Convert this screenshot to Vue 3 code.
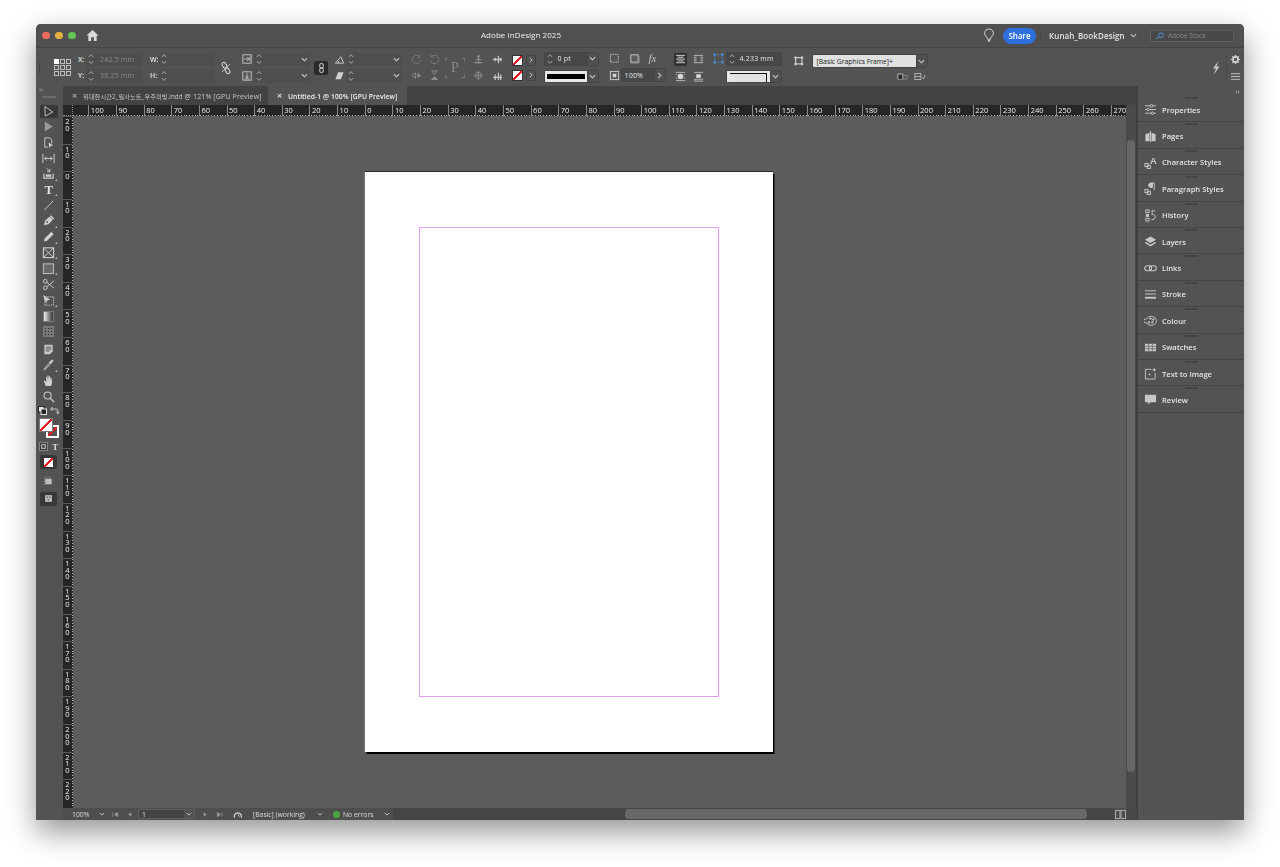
<template>
  <div class="screen">
    <div class="window">
      <!-- title bar -->
      <header class="titlebar">
        <div class="traffic">
          <span class="dot red"></span>
          <span class="dot yellow"></span>
          <span class="dot green"></span>
        </div>
        <svg class="home" viewBox="0 0 14 14"><path d="M7 1 L13.5 7 L11.5 7 L11.5 13 L8.5 13 L8.5 9 L5.5 9 L5.5 13 L2.5 13 L2.5 7 L.5 7 Z" fill="#d8d8d8"/></svg>
        <div class="app-title">Adobe InDesign 2025</div>
        <svg class="bulb" viewBox="0 0 12 16"><path d="M6 1 A4.6 4.6 0 0 0 3.6 9.6 L4.4 12 L7.6 12 L8.4 9.6 A4.6 4.6 0 0 0 6 1 Z" fill="none" stroke="#d4d4d4" stroke-width="1"/><path d="M4.8 13.5 H7.2" stroke="#d4d4d4" stroke-width="1.6"/></svg>
        <div class="share">Share</div>
        <div class="tsep"></div>
        <div class="user">Kunah_BookDesign</div>
        <svg class="chev user-chev" viewBox="0 0 8 8"><path d="M1 2.5 L4 5.5 L7 2.5" /></svg>
        <div class="tsep"></div>
        <div class="stock">
          <svg class="stock-ico" viewBox="0 0 14 10"><circle cx="9.5" cy="4" r="3" fill="none" stroke="#5a8fe0" stroke-width="1.1"/><path d="M7 6 L3 9" stroke="#5a8fe0" stroke-width="1.2"/></svg>
          <span>Adobe Stock</span>
        </div>
      </header>

      <!-- control panel -->
      <section class="control">
        <div class="grip"></div>
        <div class="refpoint">
          <i v-for="n in 9" :key="n" :class="{ on: n === 1 }"></i>
        </div>

        <div class="grp g-xy">
          <label>X:</label>
          <div class="field"><svg class="step" viewBox="0 0 6 12"><path d="M.8 4 L3 1.6 L5.2 4 M.8 8 L3 10.4 L5.2 8"/></svg><span class="dim">242.5 mm</span></div>
          <label>Y:</label>
          <div class="field"><svg class="step" viewBox="0 0 6 12"><path d="M.8 4 L3 1.6 L5.2 4 M.8 8 L3 10.4 L5.2 8"/></svg><span class="dim">38.25 mm</span></div>
        </div>
        <div class="grp g-wh">
          <label>W:</label>
          <div class="field"><svg class="step" viewBox="0 0 6 12"><path d="M.8 4 L3 1.6 L5.2 4 M.8 8 L3 10.4 L5.2 8"/></svg></div>
          <label>H:</label>
          <div class="field"><svg class="step" viewBox="0 0 6 12"><path d="M.8 4 L3 1.6 L5.2 4 M.8 8 L3 10.4 L5.2 8"/></svg></div>
        </div>
        <svg class="brokenlink" viewBox="0 0 10 14"><g transform="rotate(-30 5 7)" fill="none" stroke="#d0d0d0" stroke-width="1.1"><rect x="3.2" y=".8" width="3.6" height="6" rx="1.8"/><rect x="3.2" y="7.2" width="3.6" height="6" rx="1.8"/></g><path d="M1 11 L9 3" stroke="#d0d0d0" stroke-width=".8"/></svg>

        <div class="grp g-scale">
          <svg class="ico" viewBox="0 0 12 12"><rect x="1" y="1" width="10" height="10" fill="none" stroke="#cfcfcf"/><path d="M2.5 6 H8 M6 4 L8.5 6 L6 8 M9.5 3 V9" fill="none" stroke="#cfcfcf"/></svg>
          <div class="field spread"><svg class="step" viewBox="0 0 6 12"><path d="M.8 4 L3 1.6 L5.2 4 M.8 8 L3 10.4 L5.2 8"/></svg><svg class="chev" viewBox="0 0 8 8"><path d="M1 2.5 L4 5.5 L7 2.5"/></svg></div>
          <svg class="ico" viewBox="0 0 12 12"><rect x="1" y="1" width="10" height="10" fill="none" stroke="#cfcfcf"/><path d="M6 2.5 V8 M4 6 L6 8.5 L8 6 M3 9.5 H9" fill="none" stroke="#cfcfcf"/></svg>
          <div class="field spread"><svg class="step" viewBox="0 0 6 12"><path d="M.8 4 L3 1.6 L5.2 4 M.8 8 L3 10.4 L5.2 8"/></svg><svg class="chev" viewBox="0 0 8 8"><path d="M1 2.5 L4 5.5 L7 2.5"/></svg></div>
        </div>
        <div class="chainbtn"><svg viewBox="0 0 8 14"><rect x="2" y="1.5" width="4" height="6" rx="2" fill="none" stroke="#e0e0e0" stroke-width="1.1"/><rect x="2" y="6.5" width="4" height="6" rx="2" fill="none" stroke="#e0e0e0" stroke-width="1.1"/></svg></div>

        <div class="grp g-angle">
          <svg class="ico" viewBox="0 0 12 12"><path d="M1.5 10 H10.5 L7.5 3 Z M5 10 Q5 7.5 3.8 7" fill="none" stroke="#cfcfcf"/></svg>
          <div class="field spread"><svg class="step" viewBox="0 0 6 12"><path d="M.8 4 L3 1.6 L5.2 4 M.8 8 L3 10.4 L5.2 8"/></svg><svg class="chev" viewBox="0 0 8 8"><path d="M1 2.5 L4 5.5 L7 2.5"/></svg></div>
          <svg class="ico" viewBox="0 0 12 12"><path d="M1.5 10 L4.5 2.5 H10.5 L7.5 10 Z" fill="#cfcfcf"/></svg>
          <div class="field spread"><svg class="step" viewBox="0 0 6 12"><path d="M.8 4 L3 1.6 L5.2 4 M.8 8 L3 10.4 L5.2 8"/></svg><svg class="chev" viewBox="0 0 8 8"><path d="M1 2.5 L4 5.5 L7 2.5"/></svg></div>
        </div>

        <div class="grp g-rot">
          <svg class="ico" viewBox="0 0 12 12"><path d="M9.5 3 A4.6 4.6 0 1 0 10.6 6.5 M9.8 .8 V3.5 H7" fill="none" stroke="#7c7c7c"/></svg>
          <svg class="ico" viewBox="0 0 12 12"><path d="M2.5 3 A4.6 4.6 0 1 1 1.4 6.5 M2.2 .8 V3.5 H5" fill="none" stroke="#7c7c7c"/></svg>
          <svg class="ico" viewBox="0 0 12 12"><path d="M5 3 V9 L1 6 Z" fill="none" stroke="#8c8c8c"/><path d="M7 3 V9 L11 6 Z" fill="#8c8c8c"/></svg>
          <svg class="ico" viewBox="0 0 12 12"><path d="M3 1 H9 L6 5 Z" fill="none" stroke="#8c8c8c"/><path d="M2 11 H10 L6 6.5 Z" fill="#8c8c8c"/></svg>
        </div>
        <div class="ptext"><span>P</span></div>

        <div class="grp g-rot g-align">
          <svg class="ico" viewBox="0 0 12 12"><circle cx="6" cy="2.5" r="1.4" fill="#8c8c8c"/><path d="M6 3 V11 M3 6 H9 M1.5 9.5 H10.5" fill="none" stroke="#8c8c8c" stroke-width="1.3"/></svg>
          <svg class="ico" viewBox="0 0 12 12"><path d="M1 6 H11 M3.5 4 V8 M7 2 V10 M9.5 4 V8" fill="none" stroke="#c4c4c4" stroke-width="1.4"/></svg>
          <svg class="ico" viewBox="0 0 12 12"><circle cx="6" cy="6" r="3.4" fill="none" stroke="#8c8c8c"/><path d="M6 1 V11 M1.5 6 H10.5" stroke="#8c8c8c"/></svg>
          <svg class="ico" viewBox="0 0 12 12"><path d="M1 8 H11 M3.5 5 V11 M7 3 V11 M9.5 5 V11" fill="none" stroke="#c4c4c4" stroke-width="1.4"/></svg>
        </div>

        <div class="grp g-swatch">
          <div class="noneswatch"></div>
          <div class="arrowbtn"><svg class="chev-r" viewBox="0 0 8 8"><path d="M2.5 1 L5.5 4 L2.5 7"/></svg></div>
          <div class="noneswatch"></div>
          <div class="arrowbtn"><svg class="chev-r" viewBox="0 0 8 8"><path d="M2.5 1 L5.5 4 L2.5 7"/></svg></div>
        </div>

        <div class="grp g-stroke">
          <div class="field boxed">
            <svg class="step" viewBox="0 0 6 12"><path d="M.8 4 L3 1.6 L5.2 4 M.8 8 L3 10.4 L5.2 8"/></svg>
            <span class="val">0 pt</span>
            <div class="end"><svg class="chev" viewBox="0 0 8 8"><path d="M1 2.5 L4 5.5 L7 2.5"/></svg></div>
          </div>
          <div class="strokepick">
            <div class="strokebox"><i></i></div>
            <div class="end"><svg class="chev" viewBox="0 0 8 8"><path d="M1 2.5 L4 5.5 L7 2.5"/></svg></div>
          </div>
        </div>

        <div class="grp g-fx">
          <div class="fx-top">
            <svg class="ico" viewBox="0 0 12 12"><rect x="1.5" y="1.5" width="8.5" height="8.5" fill="none" stroke="#cfcfcf" stroke-dasharray="1.6 1"/></svg>
            <svg class="ico" viewBox="0 0 12 12"><rect x="2" y="2" width="8" height="8" fill="#5c5c5c" stroke="#cfcfcf"/><path d="M2 11 H11 V3" fill="none" stroke="#8c8c8c"/></svg>
            <span class="fxtext">fx</span>
          </div>
          <div class="fx-bottom">
            <svg class="ico" viewBox="0 0 12 12"><rect x="1.5" y="1.5" width="9" height="9" fill="none" stroke="#cfcfcf"/><rect x="4" y="4" width="4" height="4" fill="#cfcfcf"/></svg>
            <div class="field boxed pct">
              <span class="val">100%</span>
              <div class="end"><svg class="chev-r" viewBox="0 0 8 8"><path d="M2.5 1 L5.5 4 L2.5 7"/></svg></div>
            </div>
          </div>
        </div>

        <div class="grp g-text">
          <div class="textbtn on"><svg viewBox="0 0 12 12"><path d="M1 1.5 H11 M2.5 3.5 H9.5 M1 5.5 H11 M2.5 7.5 H9.5 M1 9.5 H11" stroke="#d8d8d8"/></svg></div>
          <div class="textbtn"><svg viewBox="0 0 12 12"><path d="M1 1.5 H11 M1 3.5 H4 M8 3.5 H11 M1 5.5 H4 M8 5.5 H11 M1 7.5 H4 M8 7.5 H11 M1 9.5 H11" stroke="#bdbdbd"/></svg></div>
          <div class="textbtn"><svg viewBox="0 0 12 12"><circle cx="6" cy="6" r="3" fill="#d8d8d8"/><path d="M1 1.5 H11 M1 10.5 H11" stroke="#bdbdbd"/><path d="M1 4 H2.5 M1 8 H2.5 M9.5 4 H11 M9.5 8 H11" stroke="#bdbdbd"/></svg></div>
          <div class="textbtn"><svg viewBox="0 0 12 12"><rect x="3.5" y="3.5" width="5" height="4" fill="#d8d8d8"/><path d="M1 1.5 H11 M1 9 H11 M1 11 H11" stroke="#bdbdbd"/></svg></div>
        </div>

        <div class="grp g-corner">
          <svg class="ico" viewBox="0 0 12 12"><rect x="2" y="2" width="8" height="8" fill="none" stroke="#4a90e2" stroke-dasharray="1.6 1.6"/><path d="M.5 .5 H3 V3 H.5 Z M9 .5 H11.5 V3 H9 Z M.5 9 H3 V11.5 H.5 Z M9 9 H11.5 V11.5 H9 Z" fill="#4a90e2"/></svg>
          <div class="field boxed">
            <svg class="step" viewBox="0 0 6 12"><path d="M.8 4 L3 1.6 L5.2 4 M.8 8 L3 10.4 L5.2 8"/></svg>
            <span class="val">4.233 mm</span>
          </div>
          <span></span>
          <div class="strokepick">
            <div class="strokebox light"><i></i></div>
            <div class="end"><svg class="chev" viewBox="0 0 8 8"><path d="M1 2.5 L4 5.5 L7 2.5"/></svg></div>
          </div>
        </div>

        <div class="grp g-style">
          <svg class="ico" viewBox="0 0 12 12"><rect x="2" y="2" width="7.5" height="7.5" fill="none" stroke="#cfcfcf" stroke-width="1.4"/><path d="M.5 .5 H3 V3 H.5 Z M8.5 .5 H11 V3 H8.5 Z M.5 8.5 H3 V11 H.5 Z M8.5 8.5 H11 V11 H8.5 Z" fill="#cfcfcf"/></svg>
          <div class="styledrop">
            <span>[Basic Graphics Frame]+</span>
            <div class="end"><svg class="chev" viewBox="0 0 8 8"><path d="M1 2.5 L4 5.5 L7 2.5"/></svg></div>
          </div>
          <span></span>
          <div class="styleicons">
            <svg class="ico" viewBox="0 0 14 10"><rect x="1" y="1" width="8" height="8" rx="2" fill="#8a8a8a"/><rect x="3" y="3" width="4" height="5" fill="#262626"/><path d="M9 4 H13 V8 H9" fill="none" stroke="#8a8a8a"/></svg>
            <svg class="ico" viewBox="0 0 14 10"><rect x="1" y="1.5" width="7" height="7" fill="none" stroke="#bdbdbd"/><path d="M1 5 H8" stroke="#bdbdbd"/><path d="M10 6 L11 8 L13 3" fill="none" stroke="#bdbdbd"/></svg>
          </div>
        </div>

        <svg class="bolt" viewBox="0 0 10 14"><path d="M7.5 0 L2 7.5 L5 7.5 L2.5 14 L8.5 5.5 L5.5 5.5 Z" fill="#c8c8c8"/></svg>
        <div class="gears">
          <svg class="ico" viewBox="0 0 12 12"><circle cx="6" cy="6" r="2.8" fill="none" stroke="#d4d4d4" stroke-width="1.8"/><path d="M6 1 V3 M6 9 V11 M1 6 H3 M9 6 H11 M2.5 2.5 L3.8 3.8 M8.2 8.2 L9.5 9.5 M9.5 2.5 L8.2 3.8 M3.8 8.2 L2.5 9.5" stroke="#d4d4d4" stroke-width="1.3"/></svg>
          <svg class="ico" viewBox="0 0 12 12"><path d="M1 3 H11 M1 6 H11 M1 9 H11" stroke="#c8c8c8"/></svg>
        </div>
      </section>

      <div class="main">
        <!-- tools -->
        <aside class="tools">
          <div class="collapse">››</div>
          <div class="tool-grip"></div>
          <div class="tool selected"><svg viewBox="0 0 14 14"><path d="M3 1.5 L11.5 7.5 L3.5 12 Z" fill="none" stroke="#c8c8c8"/></svg></div>
          <div class="tool"><svg viewBox="0 0 14 14"><path d="M3 1.5 L11.5 7 L3 12.5 Z" fill="#9a9a9a"/></svg></div>
          <div class="tool"><svg viewBox="0 0 14 14"><path d="M3 2 H8 L10.5 4.5 V8 M3 2 V12 H6.5" fill="none" stroke="#cfcfcf"/><path d="M7 7 L12 10 L9 11 L8 13.5 Z" fill="#cfcfcf"/></svg></div>
          <div class="tool"><svg viewBox="0 0 14 14"><path d="M1 2 V12 M13 2 V12 M3 7 H11 M5 5 L3 7 L5 9 M9 5 L11 7 L9 9" fill="none" stroke="#d0d0d0"/></svg></div>
          <div class="tool more"><svg viewBox="0 0 14 14"><path d="M2 7 V12 H12 V7" fill="none" stroke="#cfcfcf" stroke-width="1.2"/><rect x="4" y="8" width="6" height="2.5" fill="#cfcfcf"/><path d="M5 1.5 L8.5 4.5 M8.5 2 V5 H5.5" fill="none" stroke="#cfcfcf"/></svg></div>
          <div class="tool more type"><span>T</span></div>
          <div class="tool"><svg viewBox="0 0 14 14"><path d="M2.5 12 L12 2" stroke="#cfcfcf"/></svg></div>
          <div class="tool more"><svg viewBox="0 0 14 14"><path d="M2 12 L3.5 7 L8 3 L11.5 6.5 L7 11 Z" fill="#cfcfcf"/><path d="M9 2 L12.5 5.5" stroke="#cfcfcf" stroke-width="1.6"/><circle cx="5.5" cy="8.5" r="1" fill="#535353"/></svg></div>
          <div class="tool more"><svg viewBox="0 0 14 14"><path d="M2 12.5 L3 9 L10 2 L12.5 4.5 L5.5 11.5 Z" fill="#cfcfcf"/></svg></div>
          <div class="tool more"><svg viewBox="0 0 14 14"><rect x="1.5" y="2" width="11" height="10.5" fill="none" stroke="#cfcfcf" stroke-width="1.2"/><path d="M2 2.5 L12 12 M12 2.5 L2 12" stroke="#cfcfcf"/></svg></div>
          <div class="tool more"><svg viewBox="0 0 14 14"><rect x="1.5" y="2" width="11" height="10.5" fill="#6a6a6a" stroke="#c4c4c4"/></svg></div>
          <div class="tool gap"><svg viewBox="0 0 14 14"><circle cx="3.5" cy="3.5" r="2" fill="none" stroke="#cfcfcf"/><circle cx="3.5" cy="10.5" r="2" fill="none" stroke="#cfcfcf"/><path d="M5 4.5 L13 11 M5 9.5 L13 3" stroke="#cfcfcf"/></svg></div>
          <div class="tool more"><svg viewBox="0 0 14 14"><rect x="3" y="3" width="9.5" height="9" fill="none" stroke="#cfcfcf" stroke-dasharray="1.5 1"/><path d="M1 1 L9 6 L5.5 7 L4.5 10.5 Z" fill="#cfcfcf"/></svg></div>
          <div class="tool"><div class="gradient-swatch"></div></div>
          <div class="tool"><div class="feather-swatch"></div></div>
          <div class="tool gap2"><svg viewBox="0 0 14 14"><path d="M2.5 2 H11.5 V9 L8.5 12 H2.5 Z" fill="#c8c8c8"/><path d="M4 4.5 H10 M4 6.5 H10 M4 8.5 H8" stroke="#535353"/></svg></div>
          <div class="tool more"><svg viewBox="0 0 14 14"><path d="M2 12 L7 6.5 L8 7.5 L3 13 Z" fill="none" stroke="#cfcfcf"/><path d="M7 5 L11 1.5 L12.5 3 L9 7 Z" fill="#cfcfcf"/></svg></div>
          <div class="tool"><svg viewBox="0 0 14 14"><path d="M4 13 L2 7.5 L3.2 7 L4.5 8.5 V3 L5.5 3 L6 7 V1.5 H7 L7.5 7 V2.5 H8.5 L9 7 V4 H10 L11 8 L10 13 Z" fill="#cfcfcf"/></svg></div>
          <div class="tool"><svg viewBox="0 0 14 14"><circle cx="6" cy="6" r="3.8" fill="none" stroke="#cfcfcf" stroke-width="1.1"/><path d="M9 9 L13 13" stroke="#cfcfcf" stroke-width="1.4"/></svg></div>
          <div class="swaprow">
            <svg viewBox="0 0 9 9"><rect x=".5" y=".5" width="5.5" height="5.5" fill="#e8e8e8" stroke="#222"/><rect x="3" y="3" width="5.5" height="5.5" fill="#222" stroke="#e8e8e8"/></svg>
            <svg viewBox="0 0 9 9"><path d="M1 3 H6 Q8 3 8 6 M2.5 1 L.8 3 L2.5 5 M6 5.5 L8 8 L9 5.5" fill="none" stroke="#cfcfcf"/></svg>
          </div>
          <div class="fillstroke">
            <div class="fs-back"><i></i></div>
            <div class="fs-front"></div>
          </div>
          <div class="modes">
            <svg viewBox="0 0 10 10"><rect x=".5" y=".5" width="9" height="9" fill="#3b3b3b" stroke="#8a8a8a"/><rect x="3" y="3" width="4" height="4" fill="none" stroke="#d8d8d8"/></svg>
            <span>T</span>
          </div>
          <div class="applybox"><div class="noneswatch"></div></div>
          <div class="tool viewmode"><svg viewBox="0 0 14 14"><rect x="3.5" y="4" width="7" height="6" fill="#bdbdbd"/><path d="M2 4 H3 M2 7 H3 M2 10 H3 M5 2 V3 M8 2 V3" stroke="#bdbdbd"/></svg></div>
          <div class="previewbox"><svg viewBox="0 0 12 12"><rect x="1.5" y="1.5" width="9" height="9" fill="#bdbdbd"/><rect x="3.5" y="3.5" width="1.5" height="1.5" fill="#333"/><rect x="7" y="3.5" width="1.5" height="1.5" fill="#333"/><rect x="5" y="7" width="1.5" height="1.5" fill="#333"/></svg></div>
        </aside>

        <!-- document area -->
        <div class="docarea">
          <div class="tabs">
            <div class="tab"><span class="x">×</span><span class="ko">위대한시간2_필사노트_우주의빛.indd</span> @ 121% [GPU Preview]</div>
            <div class="tab active"><span class="x">×</span>Untitled-1 @ 100% [GPU Preview]</div>
          </div>
          <div class="doc-mid">
            <div class="doc-left">
              <div class="ruler-top-row">
                <div class="ruler-corner"></div>
                <div class="ruler-h">
                  <div v-for="v in hTicks" :key="v" class="h-cell">{{ Math.abs(v) }}</div>
                </div>
              </div>
              <div class="ruler-canvas-row">
                <div class="ruler-v">
                  <div v-for="(v, i) in vTicks" :key="i" class="v-cell">
                    <span v-for="(d, j) in v" :key="j">{{ d }}</span>
                  </div>
                </div>
                <div class="canvas">
                  <div class="page">
                    <div class="margins"></div>
                  </div>
                </div>
              </div>
            </div>
            <div class="vscroll"><div class="vthumb"></div></div>
          </div>
          <footer class="status">
            <span class="zoomval">100%</span>
            <svg class="chev" viewBox="0 0 8 8"><path d="M1 2.5 L4 5.5 L7 2.5"/></svg>
            <svg class="nav first" viewBox="0 0 8 8"><path d="M1 1.5 V6.5 M6.5 1.5 L3 4 L6.5 6.5 Z" fill="#9a9a9a" stroke="#9a9a9a" stroke-width=".8"/></svg>
            <svg class="nav" viewBox="0 0 8 8"><path d="M6 1.5 L2.5 4 L6 6.5 Z" fill="#9a9a9a"/></svg>
            <div class="pagefield"><span>1</span><div class="end"><svg class="chev" viewBox="0 0 8 8"><path d="M1 2.5 L4 5.5 L7 2.5"/></svg></div></div>
            <svg class="nav next" viewBox="0 0 8 8"><path d="M2 1.5 L5.5 4 L2 6.5 Z" fill="#9a9a9a"/></svg>
            <svg class="nav" viewBox="0 0 8 8"><path d="M7 1.5 V6.5 M1.5 1.5 L5 4 L1.5 6.5 Z" fill="#9a9a9a" stroke="#9a9a9a" stroke-width=".8"/></svg>
            <svg class="gauge" viewBox="0 0 12 10"><path d="M1.5 8.5 A4 4 0 1 1 9 8.5" fill="none" stroke="#dcdcdc" stroke-width="1.3"/><path d="M5.5 5 L7 7.5" stroke="#dcdcdc"/></svg>
            <span class="basic">[Basic] (working)</span>
            <svg class="chev" viewBox="0 0 8 8"><path d="M1 2.5 L4 5.5 L7 2.5"/></svg>
            <span class="okdot"></span>
            <span class="noerr">No errors</span>
            <svg class="chev" viewBox="0 0 8 8"><path d="M1 2.5 L4 5.5 L7 2.5"/></svg>
            <div class="hscroll"><div class="hthumb"></div></div>
            <svg class="split" viewBox="0 0 11 9"><rect x=".5" y=".5" width="4.5" height="8" fill="none" stroke="#a8a8a8"/><rect x="6" y=".5" width="4.5" height="8" fill="none" stroke="#a8a8a8"/></svg>
            <div class="resize"></div>
          </footer>
        </div>

        <!-- panel dock -->
        <aside class="dock">
          <div class="dock-head">‹‹</div>
          <div v-for="p in panels" :key="p.name" class="panel">
            <i class="panel-grip"></i>
            <svg class="panel-ico" viewBox="0 0 14 14" v-html="p.icon"></svg>
            <span>{{ p.name }}</span>
          </div>
        </aside>
      </div>
    </div>
  </div>
</template>

<script setup>
// top ruler runs from 100 back to 0 then up to 270
const hTicks = []
for (let v = -100; v <= 270; v += 10) hTicks.push(v)

// side ruler stacks the digits
const vTicks = []
for (let v = -20; v <= 220; v += 10) vTicks.push(String(Math.abs(v)).split(''))

const c = '#c8c8c8'
const panels = [
  { name: 'Properties', icon: `<path d="M1 3 H13 M1 7 H13 M1 11 H13" stroke="${c}"/><circle cx="8" cy="3" r="1.4" fill="#535353" stroke="${c}"/><circle cx="4.5" cy="7" r="1.4" fill="#535353" stroke="${c}"/><circle cx="9" cy="11" r="1.4" fill="#535353" stroke="${c}"/>` },
  { name: 'Pages', icon: `<path d="M7 1 V13" stroke="${c}"/><path d="M6 3 L1.5 4.5 V12 H6 Z M8 3 L12.5 4.5 V12 H8 Z" fill="${c}"/>` },
  { name: 'Character Styles', icon: `<rect x="1" y="8" width="3.4" height="3.4" fill="none" stroke="${c}"/><rect x="3.6" y="10" width="3.4" height="3.4" fill="none" stroke="${c}"/><text x="6.5" y="8.5" font-size="10" fill="${c}" font-family="Liberation Sans">A</text>` },
  { name: 'Paragraph Styles', icon: `<rect x="1" y="8" width="3.4" height="3.4" fill="none" stroke="${c}"/><rect x="3.6" y="10" width="3.4" height="3.4" fill="none" stroke="${c}"/><path d="M11 1 H7.5 A2 2 0 0 0 7.5 6 H9 V1 M11 1 V9" fill="${c}" stroke="${c}"/>` },
  { name: 'History', icon: `<rect x="2" y="1" width="3.4" height="3" fill="none" stroke="${c}"/><rect x="2" y="5.5" width="3.4" height="3" fill="${c}"/><rect x="2" y="10" width="3.4" height="3" fill="none" stroke="${c}"/><path d="M8 2 H12 M9 2 L8.5 6 Q12.5 5.5 12 9 Q11.5 12 8 11.5" fill="none" stroke="${c}"/>` },
  { name: 'Layers', icon: `<path d="M7 1.5 L13 5 L7 8.5 L1 5 Z" fill="${c}"/><path d="M1.5 8 L7 11.5 L12.5 8" fill="none" stroke="${c}" stroke-width="1.5"/>` },
  { name: 'Links', icon: `<rect x=".8" y="4" width="7.4" height="5.4" rx="2.7" fill="none" stroke="${c}" stroke-width="1.2"/><rect x="5.8" y="4" width="7.4" height="5.4" rx="2.7" fill="none" stroke="${c}" stroke-width="1.2"/>` },
  { name: 'Stroke', icon: `<path d="M1 3 H13 M1 6.5 H13" stroke="${c}"/><path d="M1 10.5 H13" stroke="${c}" stroke-width="2"/>` },
  { name: 'Colour', icon: `<path d="M8 2.5 A5.5 4.8 0 1 1 3 9.5 L1 9.5 A2 2 0 0 1 2.5 5.5 A6 5 0 0 1 8 2.5 Z" fill="none" stroke="${c}"/><circle cx="7" cy="5" r="1.2" fill="${c}"/><circle cx="10" cy="6" r="1.2" fill="${c}"/><circle cx="9" cy="9" r="1.2" fill="${c}"/><circle cx="5.5" cy="9" r="1.2" fill="${c}"/>` },
  { name: 'Swatches', icon: `<rect x="1" y="3" width="12" height="8" fill="${c}"/><path d="M1 5.7 H13 M1 8.3 H13 M5 3 V11 M9 3 V11" stroke="#535353" stroke-width=".7"/>` },
  { name: 'Text to Image', icon: `<path d="M8 2.5 H1.5 V13 H12 V6.5" fill="none" stroke="${c}"/><path d="M11 .5 L11.7 2.3 L13.5 3 L11.7 3.7 L11 5.5 L10.3 3.7 L8.5 3 L10.3 2.3 Z" fill="${c}"/><circle cx="6" cy="8" r="1" fill="${c}"/>` },
  { name: 'Review', icon: `<path d="M1 2 H13 V10 H7 L4.5 12.5 V10 H1 Z" fill="${c}"/>` }
]
</script>

<style>
html, body {
  margin: 0;
  background: #fff;
  overflow: hidden;
}
</style>

<style scoped>
.screen {
  width: 1280px;
  height: 867px;
  padding: 24px 36px 47px;
  box-sizing: border-box;
  background: #fff;
  font-family: "Open Sans", "Noto Sans CJK KR", sans-serif;
  color: #e4e4e4;
}
.window {
  height: 100%;
  display: flex;
  flex-direction: column;
  border-radius: 5px 5px 0 0;
  box-shadow: 0 12px 30px rgba(0, 0, 0, 0.42);
  background: #535353;
  overflow: hidden;
  filter: blur(0.3px);
}
svg {
  display: block;
  flex: none;
}

/* title bar */
.titlebar {
  height: 23px;
  flex: none;
  display: flex;
  align-items: center;
  background: #505050;
  border-bottom: 1px solid #454545;
  position: relative;
}
.traffic {
  display: flex;
  gap: 5.5px;
  margin-left: 6px;
}
.dot {
  width: 7.5px;
  height: 7.5px;
  border-radius: 50%;
}
.red { background: #ec6a5e; }
.yellow { background: #e5b040; }
.green { background: #62c554; }
.home {
  width: 13px;
  height: 13px;
  margin-left: 10px;
}
.app-title {
  position: absolute;
  left: 445px;
  top: 4px;
  font-size: 8px;
  font-weight: 500;
  line-height: 13px;
  letter-spacing: 0.05px;
  color: #f0f0f0;
}
.bulb {
  width: 12px;
  height: 15px;
  margin-left: auto;
}
.share {
  width: 33px;
  height: 16px;
  margin-left: 8px;
  border-radius: 8px;
  background: #2d6fdc;
  color: #fff;
  font-size: 8px;
  font-weight: 600;
  line-height: 16px;
  text-align: center;
}
.tsep {
  width: 1px;
  height: 14px;
  background: #484848;
  margin-left: 4px;
}
.user {
  width: 76px;
  margin-left: 8px;
  font-size: 8px;
  font-weight: 600;
  letter-spacing: 0.1px;
  white-space: nowrap;
  color: #e4e4e4;
}
.user-chev {
  margin: 0 5px 0 5px;
}
.stock {
  width: 84px;
  height: 12px;
  margin: 0 10px 0 3px;
  display: flex;
  align-items: center;
  gap: 3px;
  padding-left: 2px;
  box-sizing: border-box;
  background: #484848;
  border: 1px solid #5e5e5e;
  border-radius: 2px;
  font-size: 6.5px;
  color: #8a8a8a;
}
.stock-ico {
  width: 12px;
  height: 8px;
}

/* control panel */
.control {
  height: 38px;
  flex: none;
  display: flex;
  align-items: center;
  background: #535353;
  padding: 1px 0 0 3px;
  box-sizing: border-box;
  font-size: 7.5px;
}
.grip {
  width: 1px;
  height: 12px;
  background: #454545;
  margin-right: 14px;
}
.refpoint {
  width: 17px;
  display: grid;
  grid-template-columns: repeat(3, 5px);
  gap: 1px;
}
.refpoint i {
  height: 5px;
  border: 1px solid #bdbdbd;
  box-sizing: border-box;
}
.refpoint i.on {
  background: #fff;
  border-color: #fff;
}
.grp {
  display: grid;
  row-gap: 3px;
  align-items: center;
}
.grp label {
  font-weight: 600;
  font-size: 7px;
  color: #e4e4e4;
}
.field {
  height: 13.5px;
  display: flex;
  align-items: center;
  background: #4e4e4e;
  border-radius: 2px;
  box-sizing: border-box;
}
.field.spread {
  justify-content: space-between;
}
.step {
  width: 6px;
  height: 12px;
  margin: 0 3px 0 2px;
  fill: none;
  stroke: #b0b0b0;
  stroke-width: 0.9;
}
.chev, .chev-r {
  width: 7px;
  height: 7px;
  fill: none;
  stroke: #d0d0d0;
  stroke-width: 1.2;
}
.field .chev {
  margin-right: 2px;
}
.dim {
  color: #8a8a8a;
  font-size: 7px;
  letter-spacing: 0.2px;
  margin-left: 3px;
}
.g-xy {
  grid-template-columns: 8px 56px;
  margin-left: 7px;
}
.g-wh {
  grid-template-columns: 9px 56px;
  margin-left: 8px;
}
.brokenlink {
  width: 10px;
  height: 14px;
  margin-left: 6px;
}
.ico {
  width: 11px;
  height: 11px;
}
.g-scale {
  grid-template-columns: 10px 56px;
  column-gap: 2px;
  margin-left: 11px;
}
.g-scale .ico {
  width: 10px;
  height: 10px;
}
.chainbtn {
  width: 14px;
  height: 14px;
  margin-left: 4px;
  background: #2b2b2b;
  border-radius: 2px;
  display: flex;
  align-items: center;
  justify-content: center;
}
.chainbtn svg {
  width: 7px;
  height: 12px;
}
.g-angle {
  grid-template-columns: 10px 56px;
  column-gap: 2px;
  margin-left: 6px;
}
.g-rot {
  grid-template-columns: 11px 11px;
  column-gap: 7px;
  row-gap: 5px;
  margin-left: 8.5px;
}
.ptext {
  width: 20px;
  height: 20px;
  margin-left: 5.5px;
  display: flex;
  align-items: center;
  justify-content: center;
  box-sizing: border-box;
  background:
    linear-gradient(#777, #777) 0 0 / 3px 1px no-repeat,
    linear-gradient(#777, #777) 0 0 / 1px 3px no-repeat,
    linear-gradient(#777, #777) 100% 0 / 3px 1px no-repeat,
    linear-gradient(#777, #777) 100% 0 / 1px 3px no-repeat,
    linear-gradient(#777, #777) 0 100% / 3px 1px no-repeat,
    linear-gradient(#777, #777) 0 100% / 1px 3px no-repeat,
    linear-gradient(#777, #777) 100% 100% / 3px 1px no-repeat,
    linear-gradient(#777, #777) 100% 100% / 1px 3px no-repeat;
  font-family: "Liberation Serif", serif;
  font-size: 14px;
  color: #8a8a8a;
}
.g-align {
  margin-left: 7.5px;
  column-gap: 8px;
}
.g-swatch {
  grid-template-columns: 11px 10px;
  column-gap: 3px;
  margin-left: 9px;
  row-gap: 4px;
}
.noneswatch {
  width: 11px;
  height: 11px;
  box-sizing: border-box;
  background: linear-gradient(to top left, #fff 0 42%, #e01e26 42% 58%, #fff 58% 100%);
  border: 1px solid #333;
}
.arrowbtn {
  width: 10px;
  height: 11px;
  box-sizing: border-box;
  border: 1px solid #444;
  border-radius: 2px;
  display: flex;
  align-items: center;
  justify-content: center;
}
.arrowbtn .chev-r {
  width: 6px;
  height: 6px;
}
.g-stroke {
  grid-template-columns: 55px;
  margin-left: 8px;
  row-gap: 4px;
}
.boxed {
  border: 1px solid #454545;
  background: #474747;
  position: relative;
}
.val {
  font-size: 7px;
  color: #e8e8e8;
  letter-spacing: 0.2px;
  margin-left: 2px;
}
.end {
  width: 11px;
  height: 100%;
  margin-left: auto;
  display: flex;
  align-items: center;
  justify-content: center;
  background: #505050;
  border-left: 1px solid #454545;
  box-sizing: border-box;
}
.end .chev, .end .chev-r {
  margin: 0;
}
.strokepick {
  height: 13.5px;
  display: flex;
  background: #505050;
  border: 1px solid #454545;
  border-radius: 2px;
  box-sizing: border-box;
}
.strokebox {
  flex: 1;
  background: #e8e8e8;
  display: flex;
  align-items: center;
  padding: 0 2px;
}
.strokebox i {
  flex: 1;
  height: 5px;
  background: #000;
}
.strokebox.light {
  padding: 2px 3px 0;
  align-items: stretch;
}
.strokebox.light i {
  height: auto;
  background: #e2e2e2;
  border-top: 1px solid #111;
  border-right: 1px solid #111;
}
.g-fx {
  margin-left: 10px;
  row-gap: 4px;
}
.fx-top {
  display: flex;
  align-items: center;
  gap: 9px;
}
.fxtext {
  font-family: "Liberation Serif", serif;
  font-style: italic;
  font-size: 11px;
  line-height: 11px;
  color: #c4c4c4;
}
.fx-bottom {
  display: flex;
  align-items: center;
  gap: 1px;
}
.pct {
  width: 45px;
}
.pct .val {
  margin-left: 3px;
}
.g-text {
  grid-template-columns: 13px 13px;
  column-gap: 5px;
  row-gap: 4px;
  margin-left: 8px;
}
.textbtn {
  width: 13px;
  height: 13px;
  display: flex;
  align-items: center;
  justify-content: center;
  border-radius: 2px;
}
.textbtn.on {
  background: #2f2f2f;
}
.textbtn svg {
  width: 11px;
  height: 11px;
}
.g-corner {
  grid-template-columns: 11px 56px;
  column-gap: 2px;
  margin-left: 8px;
  row-gap: 4px;
}
.g-style {
  grid-template-columns: 10px 116px;
  column-gap: 8px;
  margin-left: 12px;
  row-gap: 4px;
}
.g-style .ico {
  width: 10px;
  height: 10px;
}
.styledrop {
  height: 13.5px;
  display: flex;
  align-items: center;
  background: #e0e0e0;
  color: #222;
  font-size: 6.8px;
  padding-left: 4px;
  box-sizing: border-box;
  border: 1px solid #444;
  border-radius: 2px;
}
.styleicons {
  display: flex;
  justify-content: flex-end;
  gap: 6px;
  padding-right: 2px;
}
.styleicons .ico {
  width: 12px;
  height: 9px;
}
.bolt {
  width: 10px;
  height: 14px;
  margin-left: auto;
}
.gears {
  width: 18px;
  height: 32px;
  margin-left: 5px;
  border-left: 1px solid #4a4a4a;
  display: flex;
  flex-direction: column;
  align-items: center;
  justify-content: space-between;
  padding: 2px 0;
  box-sizing: border-box;
}

/* tools + doc */
.main {
  flex: 1;
  min-height: 0;
  display: flex;
}
.tools {
  width: 27px;
  flex: none;
  display: flex;
  flex-direction: column;
  align-items: center;
  padding-right: 1.5px;
  box-sizing: border-box;
  background: #535353;
  position: relative;
}
.collapse {
  align-self: flex-start;
  height: 10px;
  margin: -1px 0 0 3px;
  font-size: 7px;
  line-height: 10px;
  color: #bbb;
}
.tool-grip {
  width: 14px;
  height: 2px;
  margin-top: 1px;
  background: #6a6a6a;
}
.tool {
  width: 18px;
  height: 15.7px;
  flex: none;
  display: flex;
  align-items: center;
  justify-content: center;
  position: relative;
}
.tool svg {
  width: 13px;
  height: 13px;
}
.tool.selected {
  height: 13px;
  margin: 7px 0 1px;
  background: #383838;
  border-radius: 2px;
}
.tool.more::after {
  content: "";
  position: absolute;
  right: 1px;
  bottom: 1px;
  border-left: 2px solid transparent;
  border-bottom: 2px solid #ccc;
}
.tool.gap {
  margin-top: 1px;
}
.tool.gap2 {
  margin-top: 1.7px;
}
.type span {
  font-family: "Liberation Serif", serif;
  font-weight: 700;
  font-size: 13px;
  line-height: 13px;
  color: #e0e0e0;
}
.gradient-swatch, .feather-swatch {
  width: 11px;
  height: 11px;
  border: 1px solid #7a7a7a;
  box-sizing: border-box;
}
.gradient-swatch {
  background: linear-gradient(90deg, #eee, #333);
}
.feather-swatch {
  background: radial-gradient(circle, #222 0 1px, #777 1px) 0 0 / 3px 3px;
}
.swaprow {
  display: flex;
  gap: 3px;
  margin-top: 2px;
}
.swaprow svg {
  width: 9px;
  height: 9px;
}
.fillstroke {
  width: 20px;
  height: 20px;
  margin-top: 3px;
  position: relative;
}
.fs-front {
  position: absolute;
  left: 0;
  top: 0;
  width: 14px;
  height: 14px;
  box-sizing: border-box;
  background: linear-gradient(to top left, #fff 0 44%, #e01e26 44% 56%, #fff 56% 100%);
  border: 1px solid #777;
}
.fs-back {
  position: absolute;
  right: 0;
  bottom: 0;
  width: 13px;
  height: 13px;
  box-sizing: border-box;
  background: #fff;
  padding: 2px;
}
.fs-back i {
  display: block;
  height: 100%;
  background: linear-gradient(to top left, #555 0 40%, #e01e26 40% 60%, #555 60% 100%);
}
.modes {
  display: flex;
  align-items: center;
  gap: 4px;
  margin-top: 3px;
  height: 11px;
}
.modes svg {
  width: 9px;
  height: 9px;
}
.modes span {
  font-family: "Liberation Serif", serif;
  font-weight: 700;
  font-size: 9px;
  color: #ddd;
}
.applybox {
  width: 17px;
  height: 14px;
  margin-top: 3px;
  background: #383838;
  border-radius: 2px;
  display: flex;
  align-items: center;
  justify-content: center;
}
.viewmode {
  margin-top: 5px;
}
.previewbox {
  width: 17px;
  height: 14px;
  margin-top: 2px;
  background: #383838;
  border-radius: 2px;
  display: flex;
  align-items: center;
  justify-content: center;
}
.previewbox svg {
  width: 9px;
  height: 9px;
}

.docarea {
  flex: 1;
  min-width: 0;
  display: flex;
  flex-direction: column;
}
.tabs {
  height: 19px;
  flex: none;
  display: flex;
  background: #434343;
  font-size: 7.1px;
  letter-spacing: 0.1px;
  line-height: 19px;
}
.tab {
  width: 205px;
  padding-left: 9px;
  box-sizing: border-box;
  color: #c8c8c8;
  white-space: nowrap;
  overflow: hidden;
}
.tab .x {
  display: inline-block;
  width: 11px;
  font-size: 9px;
}
.tab .ko {
  font-size: 6.2px;
}
.tab.active {
  width: 139px;
  background: #535353;
  color: #f0f0f0;
  font-size: 6.7px;
  font-weight: 600;
}
.doc-mid {
  flex: 1;
  min-height: 0;
  display: flex;
}
.doc-left {
  flex: 1;
  min-width: 0;
  display: flex;
  flex-direction: column;
}
.ruler-top-row {
  height: 11px;
  flex: none;
  display: flex;
  background: #262626;
}
.ruler-corner {
  width: 10px;
  flex: none;
  box-sizing: border-box;
  border-right: 1px dotted #888;
  border-bottom: 1px dotted #888;
}
.ruler-h {
  flex: 1;
  min-width: 0;
  display: flex;
  overflow: hidden;
  padding-left: 15.35px;
  background: repeating-linear-gradient(90deg, #b5b5b5 0 1px, transparent 1px 2.765px) 0.35px 100% / 100% 1.5px no-repeat;
}
.h-cell {
  width: 27.65px;
  flex: none;
  box-sizing: border-box;
  padding-left: 1.5px;
  border-left: 1px solid #8a8a8a;
  font-size: 7.5px;
  line-height: 10px;
  color: #f0f0f0;
}
.ruler-canvas-row {
  flex: 1;
  min-height: 0;
  display: flex;
}
.ruler-v {
  width: 10px;
  flex: none;
  overflow: hidden;
  background: #262626 repeating-linear-gradient(180deg, #b5b5b5 0 1px, transparent 1px 2.765px) 100% 0.7px / 1.5px 100% no-repeat;
  background-color: #262626;
}
.v-cell {
  height: 27.65px;
  box-sizing: border-box;
  border-top: 1px solid #5a5a5a;
  padding-top: 1px;
  display: flex;
  flex-direction: column;
  align-items: center;
  font-size: 7.5px;
  line-height: 6.5px;
  color: #f0f0f0;
  width: 9px;
}
.canvas {
  flex: 1;
  min-width: 0;
  background: #5c5c5c;
  padding: 56px 0 0 292px;
  box-sizing: border-box;
}
.page {
  width: 408px;
  height: 580px;
  box-sizing: border-box;
  padding: 55px 54px 55px 54px;
  background: #fff;
  box-shadow: 1.5px 2px 0 #000, -1px 0 0 #777, 0 -1px 0 #2a2a2a;
}
.margins {
  height: 100%;
  box-sizing: border-box;
  border: 1px solid #e29cf0;
}
.vscroll {
  width: 11px;
  flex: none;
  background: #4a4a4a;
  border-right: 1px solid #3e3e3e;
  box-sizing: border-box;
  padding: 35px 1px 36px;
}
.vthumb {
  height: 100%;
  border-radius: 4px;
  background: #676767;
}

/* status bar */
.status {
  height: 12px;
  flex: none;
  display: flex;
  align-items: center;
  background: #4e4e4e;
  font-size: 6.8px;
  color: #dcdcdc;
}
.status .chev {
  width: 6px;
  height: 6px;
}
.zoomval {
  margin-left: 9px;
  width: 27px;
}
.nav {
  width: 7px;
  height: 7px;
}
.nav.first {
  margin: 0 7px 0 7px;
}
.pagefield {
  width: 57px;
  height: 10px;
  margin-left: 5px;
  display: flex;
  align-items: center;
  padding-left: 3px;
  box-sizing: border-box;
  background: #444;
  border: 1px solid #5e5e5e;
  border-radius: 1px;
}
.nav.next {
  margin: 0 7px 0 7px;
}
.gauge {
  width: 11px;
  height: 9px;
  margin-left: 10px;
}
.basic {
  margin-left: 9px;
  width: 64px;
}
.okdot {
  width: 7px;
  height: 7px;
  border-radius: 50%;
  background: #46a83c;
  margin-left: 10px;
}
.noerr {
  margin-left: 3px;
  width: 41px;
}
.hscroll {
  flex: 1;
  height: 100%;
  margin-left: 3px;
  background: #454545;
  padding: 1px 27px 1px 232px;
  box-sizing: border-box;
}
.hthumb {
  height: 100%;
  border-radius: 4px;
  background: #676767;
}
.split {
  width: 11px;
  height: 9px;
  margin: 0 1px 0 1px;
}
.resize {
  width: 10px;
  height: 100%;
  background: #484848;
}

/* dock */
.dock {
  width: 107px;
  flex: none;
  background: #535353;
  border-left: 1px solid #3e3e3e;
  box-sizing: border-box;
}
.dock-head {
  height: 10px;
  margin-right: 4px;
  text-align: right;
  font-size: 8px;
  line-height: 9px;
  color: #bbb;
}
.panel {
  height: 26.4px;
  box-sizing: border-box;
  display: flex;
  align-items: center;
  gap: 5px;
  padding: 2px 0 0 6px;
  border-bottom: 1px solid #444;
  position: relative;
  font-size: 7.6px;
  font-weight: 600;
  color: #e4e4e4;
}
.panel-grip {
  position: absolute;
  left: 47px;
  top: 1px;
  width: 13px;
  height: 2px;
  background: #444;
}
.panel-ico {
  width: 13px;
  height: 13px;
}
</style>
